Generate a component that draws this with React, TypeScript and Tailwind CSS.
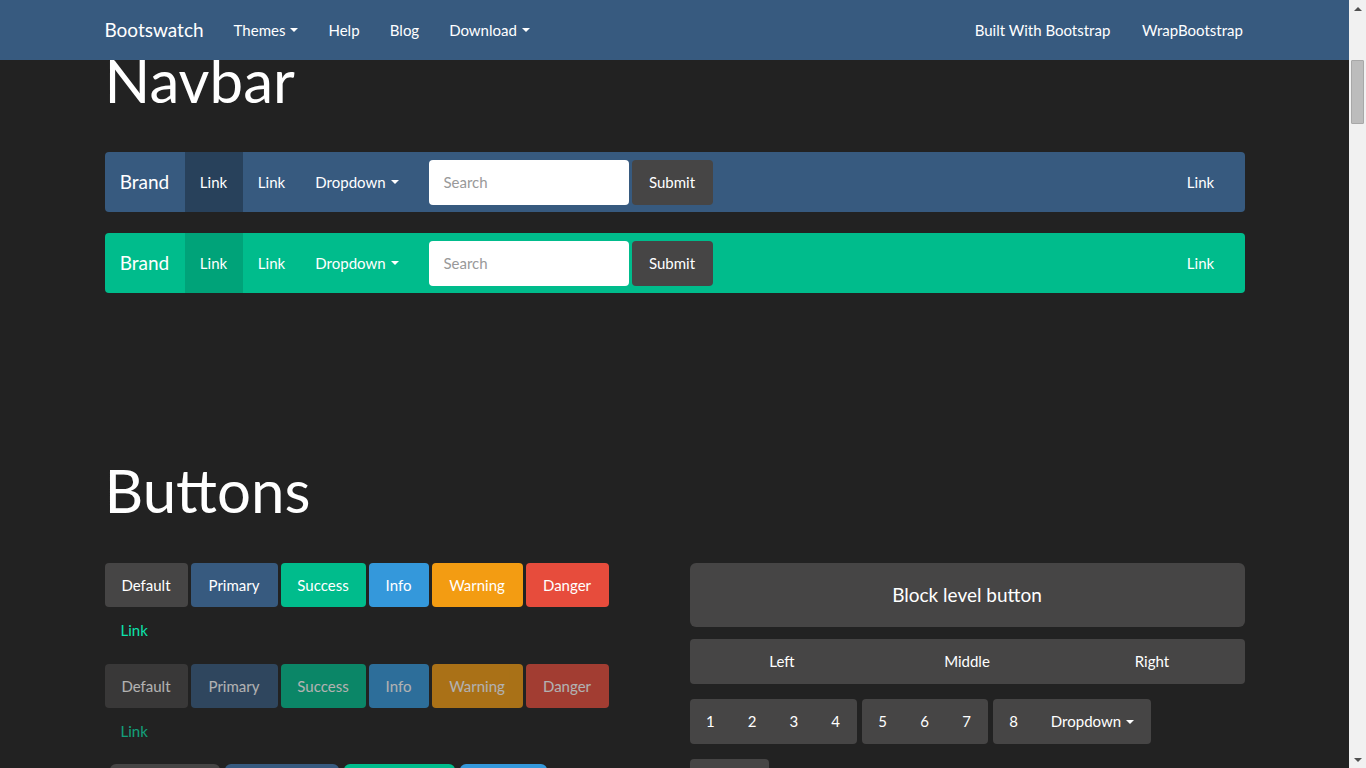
import React from "react";

const Caret = ({ className = "" }: { className?: string }) => (
  <span
    className={
      "ml-[5px] inline-block h-0 w-0 border-x-[4px] border-t-[4px] border-x-transparent border-t-white align-middle " +
      className
    }
  />
);

function TopNav() {
  return (
    <div className="h-[60px] w-full shrink-0 bg-[#375a7f] text-white">
      <div className="mx-auto flex h-full w-[1170px] items-center px-[15px]">
        <div className="-ml-[15px] flex h-full w-[129px] items-center justify-center text-[19px]">Bootswatch</div>
        <div className="flex h-full w-[95px] items-center justify-center text-[15px]">
          Themes
          <Caret />
        </div>
        <div className="flex h-full w-[61px] items-center justify-center text-[15px]">Help</div>
        <div className="flex h-full w-[60px] items-center justify-center text-[15px]">Blog</div>
        <div className="flex h-full w-[110px] items-center justify-center text-[15px]">
          Download
          <Caret />
        </div>
        <div className="ml-auto flex h-full w-[166px] items-center justify-center text-[15px]">Built With Bootstrap</div>
        <div className="-mr-[15px] flex h-full w-[134px] items-center justify-center text-[15px]">WrapBootstrap</div>
      </div>
    </div>
  );
}

function DemoNav({ bg, active }: { bg: string; active: string }) {
  return (
    <div className={"mb-[21px] flex h-[60px] items-stretch rounded-[4px] pr-[15px] text-white " + bg}>
      <div className="flex w-[80px] items-center justify-center text-[19px]">Brand</div>
      <div className={"flex w-[58px] items-center justify-center text-[15px] " + active}>Link</div>
      <div className="flex w-[58px] items-center justify-center text-[15px]">Link</div>
      <div className="flex w-[113px] items-center justify-center text-[15px]">
        Dropdown
        <Caret />
      </div>
      <div className="flex items-center px-[15px]">
        <div className="flex h-[45px] w-[200px] items-center rounded-[4px] bg-white px-[15px] text-[15px] text-[#999]">
          Search
        </div>
        <div className="ml-[3px] flex h-[45px] w-[81px] items-center justify-center rounded-[4px] bg-[#464545] text-[15px] text-white">
          Submit
        </div>
      </div>
      <div className="ml-auto flex w-[58px] items-center justify-center text-[15px]">Link</div>
    </div>
  );
}

const btnColors = [
  { label: "Default", cls: "bg-[#464545] w-[83px]", lg: "w-[110px]" },
  { label: "Primary", cls: "bg-[#375a7f] w-[87px]", lg: "w-[114px]" },
  { label: "Success", cls: "bg-[#00bc8c] w-[85px]", lg: "w-[111px]" },
  { label: "Info", cls: "bg-[#3498db] w-[60px]", lg: "w-[87px]" },
  { label: "Warning", cls: "bg-[#f39c12] w-[91px]", lg: "w-[118px]" },
  { label: "Danger", cls: "bg-[#e74c3c] w-[83px]", lg: "w-[110px]" },
];

function ButtonRow({ disabled }: { disabled?: boolean }) {
  return (
    <div className={"flex w-[555px] flex-wrap gap-x-[3px] " + (disabled ? "mb-[10px]" : "mb-[11px]")}>
      {btnColors.map((b) => (
        <div
          key={b.label}
          className={
            "mb-[1px] flex h-[44px] items-center justify-center rounded-[4px] text-[15px] text-white " +
            b.cls +
            (disabled ? " opacity-65" : "")
          }
        >
          {b.label}
        </div>
      ))}
      <div
        className={
          "flex h-[45px] items-center pl-[16px] pr-[15px] text-[15px] text-[#0ce3ac] " +
          (disabled ? "opacity-65" : "")
        }
      >
        Link
      </div>
    </div>
  );
}

function LargeRow() {
  return (
    <div className="ml-[5px] flex gap-x-[5px]">
      {btnColors.slice(0, 4).map((b) => (
        <div
          key={b.label}
          className={
            "flex h-[64px] items-center justify-center rounded-[6px] text-[19px] text-white " +
            b.cls.split(" ")[0] +
            " " +
            b.lg
          }
        >
          {b.label}
        </div>
      ))}
    </div>
  );
}

function RightColumn() {
  return (
    <div className="flex w-[555px] flex-col">
      <div className="flex h-[64px] items-center justify-center rounded-[6px] bg-[#464545] text-[19px] text-white">
        Block level button
      </div>
      <div className="mt-[12px] grid h-[45px] grid-cols-3 rounded-[4px] bg-[#464545] text-[15px] text-white">
        <div className="flex items-center justify-center">Left</div>
        <div className="flex items-center justify-center">Middle</div>
        <div className="flex items-center justify-center">Right</div>
      </div>
      <div className="mt-[15px] flex gap-x-[5px] text-[15px] text-white">
        <div className="flex h-[45px] rounded-[4px] bg-[#464545]">
          {["1", "2", "3", "4"].map((n) => (
            <div key={n} className="flex w-[41.75px] items-center justify-center">
              {n}
            </div>
          ))}
        </div>
        <div className="flex h-[45px] rounded-[4px] bg-[#464545]">
          {["5", "6", "7"].map((n) => (
            <div key={n} className="flex w-[42px] items-center justify-center">
              {n}
            </div>
          ))}
        </div>
        <div className="flex h-[45px] rounded-[4px] bg-[#464545]">
          <div className="flex w-[42px] items-center justify-center">8</div>
          <div className="flex w-[116px] items-center justify-center">
            Dropdown
            <Caret className="ml-[4px]" />
          </div>
        </div>
      </div>
      <div className="mt-[15px] h-[45px] w-[79px] rounded-[4px] bg-[#464545]" />
    </div>
  );
}

function Scrollbar() {
  return (
    <div className="flex h-full w-[17px] shrink-0 flex-col items-center bg-[#f1f1f1]">
      <div className="flex h-[17px] w-full items-center justify-center">
        <span className="inline-block h-0 w-0 border-x-[4px] border-b-[4px] border-x-transparent border-b-[#505050]" />
      </div>
      <div className="mt-[43px] h-[64px] w-[13px] rounded-[1px] border border-[#a8a8a8] bg-[#bcbcbc]" />
      <div className="mt-auto flex h-[17px] w-full items-center justify-center">
        <span className="inline-block h-0 w-0 border-x-[4px] border-t-[4px] border-x-transparent border-t-[#505050]" />
      </div>
    </div>
  );
}

export default function App() {
  return (
    <div
      className="flex h-screen w-full overflow-hidden bg-[#222222]"
      style={{ fontFamily: "Lato, 'Open Sans', 'Liberation Sans', sans-serif" }}
    >
      <div className="flex min-w-0 flex-1 flex-col">
        <TopNav />
        <div className="min-h-0 flex-1 overflow-hidden">
          <div className="mx-auto w-[1170px] px-[15px]">
            <h1 className="-mt-[13px] h-[66px] text-[60px] leading-[66px] text-white">Navbar</h1>
            <div className="mt-[39px]">
              <DemoNav bg="bg-[#375a7f]" active="bg-[#28415b]" />
              <DemoNav bg="bg-[#00bc8c]" active="bg-[#00a379]" />
            </div>
            <h1 className="mt-[164px] h-[66px] text-[60px] leading-[66px] text-white">Buttons</h1>
            <div className="mt-[40px] flex gap-x-[30px]">
              <div className="w-[555px]">
                <ButtonRow />
                <ButtonRow disabled />
                <LargeRow />
              </div>
              <RightColumn />
            </div>
          </div>
        </div>
      </div>
      <Scrollbar />
    </div>
  );
}
